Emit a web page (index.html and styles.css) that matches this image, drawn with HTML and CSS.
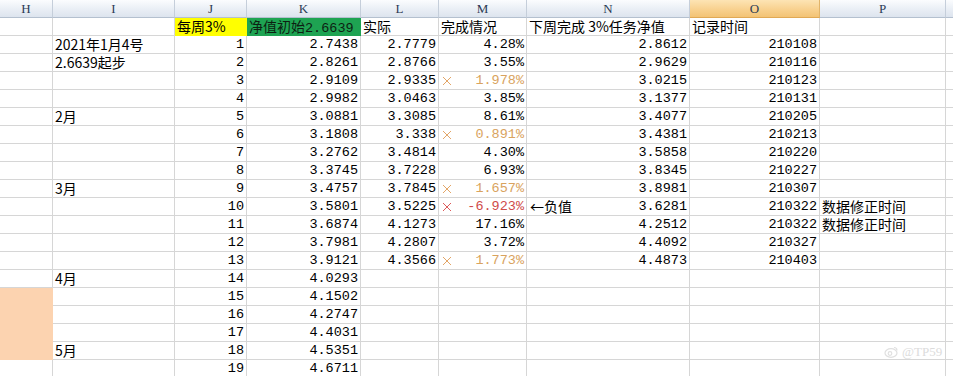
FILE: index.html
```html
<!DOCTYPE html>
<html lang="zh-CN">
<head>
<meta charset="utf-8">
<title>Sheet</title>
<link rel="stylesheet" href="styles.css">
</head>
<body>
<div class="sheet">
  <div class="row head">
    <div class="c">H</div><div class="c">I</div><div class="c">J</div><div class="c">K</div><div class="c">L</div><div class="c">M</div><div class="c">N</div><div class="c sel">O</div><div class="c">P</div><div class="c last"></div>
  </div>
  <div class="row">
    <div class="c"></div><div class="c"></div>
    <div class="c t yellow">每周3%</div>
    <div class="c t green">净值初始<span class="m">2.6639</span></div>
    <div class="c t">实际</div>
    <div class="c t">完成情况</div>
    <div class="c t">下周完成 3%任务净值</div>
    <div class="c t">记录时间</div>
    <div class="c"></div><div class="c last"></div>
  </div>
  <div class="row">
    <div class="c"></div><div class="c t">2021年1月4号</div>
    <div class="c n">1</div><div class="c n">2.7438</div><div class="c n">2.7779</div><div class="c n">4.28%</div><div class="c n">2.8612</div><div class="c n">210108</div><div class="c"></div><div class="c last"></div>
  </div>
  <div class="row">
    <div class="c"></div><div class="c t">2.6639起步</div>
    <div class="c n">2</div><div class="c n">2.8261</div><div class="c n">2.8766</div><div class="c n">3.55%</div><div class="c n">2.9629</div><div class="c n">210116</div><div class="c"></div><div class="c last"></div>
  </div>
  <div class="row">
    <div class="c"></div><div class="c"></div>
    <div class="c n">3</div><div class="c n">2.9109</div><div class="c n">2.9335</div>
    <div class="c n mark warn"><svg class="x" viewBox="0 0 10 10"><path d="M1 1L9 9M9 1L1 9"/></svg><span>1.978%</span></div>
    <div class="c n">3.0215</div><div class="c n">210123</div><div class="c"></div><div class="c last"></div>
  </div>
  <div class="row">
    <div class="c"></div><div class="c"></div>
    <div class="c n">4</div><div class="c n">2.9982</div><div class="c n">3.0463</div><div class="c n">3.85%</div><div class="c n">3.1377</div><div class="c n">210131</div><div class="c"></div><div class="c last"></div>
  </div>
  <div class="row">
    <div class="c"></div><div class="c t">2月</div>
    <div class="c n">5</div><div class="c n">3.0881</div><div class="c n">3.3085</div><div class="c n">8.61%</div><div class="c n">3.4077</div><div class="c n">210205</div><div class="c"></div><div class="c last"></div>
  </div>
  <div class="row">
    <div class="c"></div><div class="c"></div>
    <div class="c n">6</div><div class="c n">3.1808</div><div class="c n">3.338</div>
    <div class="c n mark warn"><svg class="x" viewBox="0 0 10 10"><path d="M1 1L9 9M9 1L1 9"/></svg><span>0.891%</span></div>
    <div class="c n">3.4381</div><div class="c n">210213</div><div class="c"></div><div class="c last"></div>
  </div>
  <div class="row">
    <div class="c"></div><div class="c"></div>
    <div class="c n">7</div><div class="c n">3.2762</div><div class="c n">3.4814</div><div class="c n">4.30%</div><div class="c n">3.5858</div><div class="c n">210220</div><div class="c"></div><div class="c last"></div>
  </div>
  <div class="row">
    <div class="c"></div><div class="c"></div>
    <div class="c n">8</div><div class="c n">3.3745</div><div class="c n">3.7228</div><div class="c n">6.93%</div><div class="c n">3.8345</div><div class="c n">210227</div><div class="c"></div><div class="c last"></div>
  </div>
  <div class="row">
    <div class="c"></div><div class="c t">3月</div>
    <div class="c n">9</div><div class="c n">3.4757</div><div class="c n">3.7845</div>
    <div class="c n mark warn"><svg class="x" viewBox="0 0 10 10"><path d="M1 1L9 9M9 1L1 9"/></svg><span>1.657%</span></div>
    <div class="c n">3.8981</div><div class="c n">210307</div><div class="c"></div><div class="c last"></div>
  </div>
  <div class="row">
    <div class="c"></div><div class="c"></div>
    <div class="c n">10</div><div class="c n">3.5801</div><div class="c n">3.5225</div>
    <div class="c n mark bad"><svg class="x" viewBox="0 0 10 10"><path d="M1 1L9 9M9 1L1 9"/></svg><span>-6.923%</span></div>
    <div class="c n split"><span class="note">←负值</span><span>3.6281</span></div>
    <div class="c n">210322</div><div class="c t">数据修正时间</div><div class="c last"></div>
  </div>
  <div class="row">
    <div class="c"></div><div class="c"></div>
    <div class="c n">11</div><div class="c n">3.6874</div><div class="c n">4.1273</div><div class="c n">17.16%</div><div class="c n">4.2512</div><div class="c n">210322</div><div class="c t">数据修正时间</div><div class="c last"></div>
  </div>
  <div class="row">
    <div class="c"></div><div class="c"></div>
    <div class="c n">12</div><div class="c n">3.7981</div><div class="c n">4.2807</div><div class="c n">3.72%</div><div class="c n">4.4092</div><div class="c n">210327</div><div class="c"></div><div class="c last"></div>
  </div>
  <div class="row">
    <div class="c"></div><div class="c"></div>
    <div class="c n">13</div><div class="c n">3.9121</div><div class="c n">4.3566</div>
    <div class="c n mark warn"><svg class="x" viewBox="0 0 10 10"><path d="M1 1L9 9M9 1L1 9"/></svg><span>1.773%</span></div>
    <div class="c n">4.4873</div><div class="c n">210403</div><div class="c"></div><div class="c last"></div>
  </div>
  <div class="row">
    <div class="c"></div><div class="c t">4月</div>
    <div class="c n">14</div><div class="c n">4.0293</div><div class="c"></div><div class="c"></div><div class="c"></div><div class="c"></div><div class="c"></div><div class="c last"></div>
  </div>
  <div class="row">
    <div class="c peach"></div><div class="c"></div>
    <div class="c n">15</div><div class="c n">4.1502</div><div class="c"></div><div class="c"></div><div class="c"></div><div class="c"></div><div class="c"></div><div class="c last"></div>
  </div>
  <div class="row">
    <div class="c peach"></div><div class="c"></div>
    <div class="c n">16</div><div class="c n">4.2747</div><div class="c"></div><div class="c"></div><div class="c"></div><div class="c"></div><div class="c"></div><div class="c last"></div>
  </div>
  <div class="row">
    <div class="c peach"></div><div class="c"></div>
    <div class="c n">17</div><div class="c n">4.4031</div><div class="c"></div><div class="c"></div><div class="c"></div><div class="c"></div><div class="c"></div><div class="c last"></div>
  </div>
  <div class="row">
    <div class="c peach"></div><div class="c t">5月</div>
    <div class="c n">18</div><div class="c n">4.5351</div><div class="c"></div><div class="c"></div><div class="c"></div><div class="c"></div><div class="c"></div><div class="c last"></div>
  </div>
  <div class="row">
    <div class="c"></div><div class="c"></div>
    <div class="c n">19</div><div class="c n">4.6711</div><div class="c"></div><div class="c"></div><div class="c"></div><div class="c"></div><div class="c"></div><div class="c last"></div>
  </div>
  <div class="wm">
    <svg class="wm-ico" viewBox="0 0 14 12"><ellipse cx="7" cy="7" rx="6" ry="4.3"/><circle cx="6" cy="7.5" r="1.8"/><path d="M10 1.5a3 3 0 0 1 3 3"/></svg>
    <span>@TP59</span>
  </div>
</div>
</body>
</html>
```

FILE: styles.css
```css
html, body {
  margin: 0;
  padding: 0;
  background: #ffffff;
}

.sheet {
  position: relative;
  width: 953px;
  height: 376px;
  overflow: hidden;
  font-family: "Liberation Mono", "Noto Sans CJK SC", monospace;
  font-size: 13.5px;
  color: #000;
}

.row {
  display: grid;
  grid-template-columns: 53px 122px 72px 114px 78px 88px 163px 130px 126px 1fr;
  height: 18px;
}

.c {
  box-sizing: border-box;
  height: 18px;
  border-right: 1px solid #d6d6d6;
  border-bottom: 1px solid #d6d6d6;
  line-height: 17px;
  white-space: nowrap;
}

.c.last {
  border-right: none;
}

.head .c {
  background: linear-gradient(#fbfcfe, #e9eef5 55%, #dde4ee);
  border-right: 1px solid #c5ceda;
  border-bottom: 1px solid #b4c0cf;
  text-align: center;
  font-family: "Liberation Serif", serif;
  font-size: 13px;
  color: #2b3a55;
  line-height: 18px;
}

.head .c.sel {
  background: linear-gradient(#fde4b4, #f8d18f 55%, #f3c375);
  border-right-color: #e2b469;
  border-bottom-color: #e0a955;
}

.head .c.last {
  border-right: none;
}

.t {
  font-family: "Noto Sans CJK SC", "Liberation Sans", sans-serif;
  font-size: 14px;
  line-height: 16px;
  padding-left: 2px;
  text-align: left;
}

.t .m {
  font-family: "Liberation Mono", monospace;
  font-size: 13.5px;
}

.n {
  text-align: right;
  padding-right: 2px;
}

.yellow {
  background: #ffff00;
  border-color: #ffff00;
}

.green {
  background: #1ea352;
  border-color: #1ea352;
  color: #0d1f12;
}

.peach {
  background: #fcd3b0;
  border-right-color: #fcd3b0;
  border-bottom-color: #fcd3b0;
}

.mark {
  display: flex;
  align-items: center;
  justify-content: space-between;
  padding-left: 3px;
}

.x {
  width: 10px;
  height: 10px;
  fill: none;
  stroke-width: 1;
}

.warn {
  color: #d9a35e;
}

.warn .x {
  stroke: #e3a668;
}

.bad {
  color: #cf4a4a;
}

.bad .x {
  stroke: #dd5b5b;
}

.split {
  display: flex;
  justify-content: space-between;
  padding-left: 3px;
}

.note {
  font-family: "Noto Sans CJK SC", sans-serif;
  font-size: 14px;
  line-height: 16px;
}

.wm {
  position: absolute;
  left: 884px;
  top: 344px;
  display: flex;
  align-items: center;
  gap: 4px;
  color: #dcdcdc;
  font-family: "Liberation Serif", serif;
  font-size: 13px;
}

.wm-ico {
  width: 14px;
  height: 12px;
  fill: none;
  stroke: #e0e0e0;
  stroke-width: 1.2;
}
```
